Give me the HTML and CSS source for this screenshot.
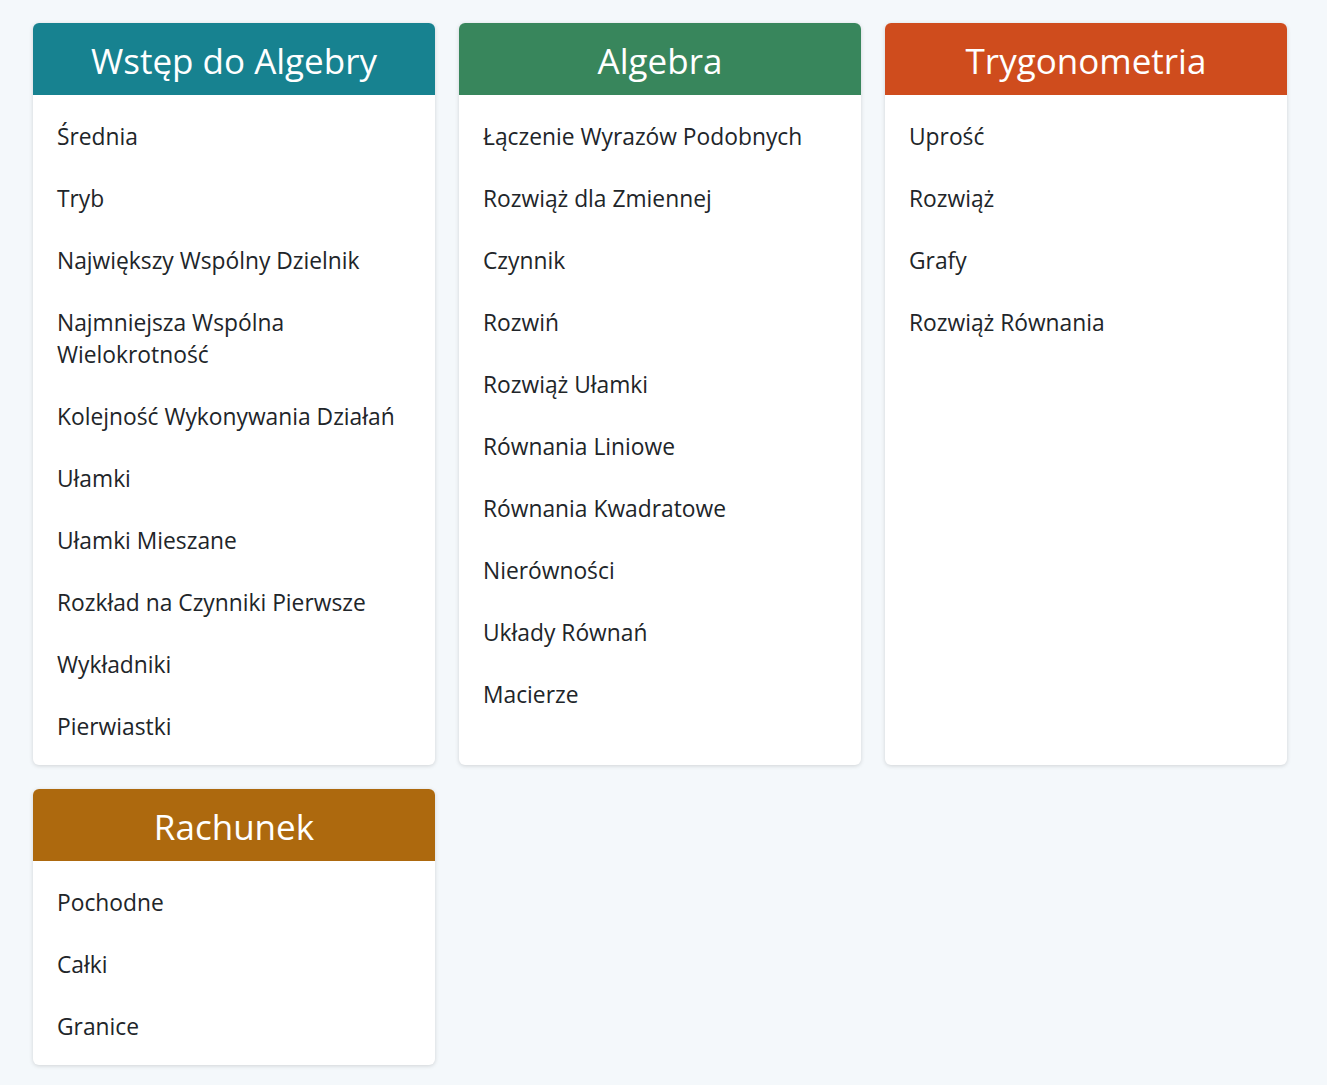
FILE: index.html
```html
<!DOCTYPE html>
<html lang="pl">
<head>
<meta charset="UTF-8">
<title>Tematy</title>
<link rel="stylesheet" href="styles.css">
</head>
<body>

<div class="topics">
    <section class="topic">
        <h2 class="topic-title teal">Wstęp do Algebry</h2>
        <ul class="topic-list">
            <li>Średnia</li>
            <li>Tryb</li>
            <li>Największy Wspólny Dzielnik</li>
            <li>Najmniejsza Wspólna Wielokrotność</li>
            <li>Kolejność Wykonywania Działań</li>
            <li>Ułamki</li>
            <li>Ułamki Mieszane</li>
            <li>Rozkład na Czynniki Pierwsze</li>
            <li>Wykładniki</li>
            <li>Pierwiastki</li>
        </ul>
    </section>

    <section class="topic">
        <h2 class="topic-title green">Algebra</h2>
        <ul class="topic-list">
            <li>Łączenie Wyrazów Podobnych</li>
            <li>Rozwiąż dla Zmiennej</li>
            <li>Czynnik</li>
            <li>Rozwiń</li>
            <li>Rozwiąż Ułamki</li>
            <li>Równania Liniowe</li>
            <li>Równania Kwadratowe</li>
            <li>Nierówności</li>
            <li>Układy Równań</li>
            <li>Macierze</li>
        </ul>
    </section>

    <section class="topic">
        <h2 class="topic-title orange">Trygonometria</h2>
        <ul class="topic-list">
            <li>Uprość</li>
            <li>Rozwiąż</li>
            <li>Grafy</li>
            <li>Rozwiąż Równania</li>
        </ul>
    </section>

    <section class="topic">
        <h2 class="topic-title brown">Rachunek</h2>
        <ul class="topic-list">
            <li>Pochodne</li>
            <li>Całki</li>
            <li>Granice</li>
        </ul>
    </section>
</div>

</body>
</html>
```

FILE: styles.css
```css
body {
    font-family: 'Open Sans', 'Noto Sans', sans-serif;
    background: #f4f8fb;
    color: #212529;
    margin: 0;
    padding: 23px 33px;
}
.topics {
    display: grid;
    grid-template-columns: repeat(3, 402px);
    gap: 24px;
}
.topic {
    background: white;
    border-radius: 6px;
    overflow: hidden;
    box-shadow: 0 1px 4px rgba(0,0,0,0.15);
}
.topic-title {
    margin: 0;
    height: 72px;
    box-sizing: border-box;
    padding-top: 3px;
    line-height: 70px;
    text-align: center;
    color: white;
    font-weight: normal;
    font-size: 35px;
}
.teal { background-color: #178290; }
.green { background-color: #38865c; }
.orange { background-color: #cf4c1d; }
.brown { background-color: #ad690e; }
.topic-list {
    list-style: none;
    margin: 0;
    padding: 11px 0 7px;
}
.topic-list li {
    padding: 15px 24px;
    font-size: 22.8px;
    line-height: 32px;
}
```
